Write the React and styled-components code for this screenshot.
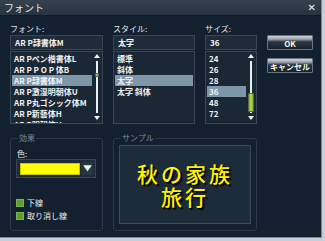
import React from "react";
import styled, { createGlobalStyle } from "styled-components";

const GlobalStyle = createGlobalStyle`
  html, body {
    margin: 0;
    padding: 0;
    background: #c6cdd7;
  }
  body {
    font-family: "Noto Sans CJK JP", "Noto Sans", sans-serif;
    -webkit-font-smoothing: antialiased;
  }
`;

const Window = styled.div`
  width: 322px;
  height: 238px;
  box-sizing: border-box;
  background: #132030;
  border-right: 1px solid #7b8696;
  border-bottom: 1px solid #7b8696;
  display: flex;
  flex-direction: column;
  overflow: hidden;
`;

const TitleBar = styled.div`
  height: 16px;
  flex: none;
  display: flex;
  align-items: center;
  justify-content: space-between;
  padding: 0 5px 0 4px;
  background: linear-gradient(#34414f, #27333f);
  border-bottom: 1px solid #0e1925;
  box-sizing: border-box;
  color: #e8eaec;
  font-size: 10px;
`;

const Close = styled.span`
  font-size: 10px;
  font-weight: bold;
  font-family: "DejaVu Sans", sans-serif;
  color: #f2f2f2;
`;

const Body = styled.div`
  padding: 8px 0 0 10px;
`;

const TopRow = styled.div`
  display: grid;
  grid-template-columns: 93px 82px 52px 46px;
  column-gap: 10px;
`;

const Column = styled.div`
  display: flex;
  flex-direction: column;
`;

const Label = styled.div`
  height: 11px;
  line-height: 10px;
  font-size: 8px;
  color: #e6e8ea;
`;

const Input = styled.div`
  height: 15px;
  box-sizing: border-box;
  border: 1px solid #3a4654;
  background: #1e2b39;
  padding-left: 4px;
  font-size: 8px;
  font-weight: bold;
  line-height: 13px;
  color: #f4f4f4;
  white-space: nowrap;
`;

const ListBox = styled.div`
  margin-top: 1px;
  height: 73px;
  box-sizing: border-box;
  border: 1px solid #3a4654;
  background: #1a2734;
  display: flex;
  overflow: hidden;
`;

const Items = styled.div`
  flex: 1;
  padding: 1px ${(p) => (p.$scroll ? 0 : 1)}px 0 1px;
  min-width: 0;
`;

const Item = styled.div`
  height: 11px;
  line-height: 11px;
  padding-left: 2px;
  font-size: 8px;
  font-weight: bold;
  color: #f2f2f2;
  white-space: nowrap;
  overflow: hidden;
  background: ${(p) => (p.$selected ? "#7d97a8" : "transparent")};
`;

const ScrollBar = styled.div`
  width: 10px;
  flex: none;
  display: flex;
  flex-direction: column;
  align-items: center;
  padding: 2px 0 3px;
  box-sizing: border-box;
`;

const Arrow = styled.div`
  width: 0;
  height: 0;
  border-left: 3px solid transparent;
  border-right: 3px solid transparent;
  ${(p) =>
    p.$down
      ? "border-top: 4px solid #f0f2f4;"
      : "border-bottom: 4px solid #f0f2f4;"}
`;

const Track = styled.div`
  flex: 1;
  width: 8px;
  margin: 3px 0;
  position: relative;
  &::before {
    content: "";
    position: absolute;
    left: 3px;
    top: 0;
    bottom: 0;
    width: 2px;
    background: #e9edf0;
  }
`;

const Thumb = styled.div`
  position: absolute;
  left: ${(p) => p.$left}px;
  width: ${(p) => p.$width}px;
  box-sizing: border-box;
  border: 1px solid #5b6a50;
  border-radius: 1px;
  background: linear-gradient(90deg, #6fa52a, #c4e24a 50%, #6fa52a);
`;

const Buttons = styled.div`
  display: flex;
  flex-direction: column;
  gap: 8px;
  padding-top: 11px;
`;

const Button = styled.div`
  height: ${(p) => p.$h}px;
  box-sizing: border-box;
  border: 1px solid #6b7480;
  border-radius: 1px;
  background: linear-gradient(#d2d6da 0, #9aa1a8 25%, #2b3744 45%, #17222e 100%);
  color: #ffffff;
  font-size: 8px;
  font-weight: bold;
  text-align: center;
  line-height: ${(p) => p.$h + 1}px;
  text-shadow: 0 0 1px #000;
`;

const BottomRow = styled.div`
  display: flex;
  gap: 10px;
  margin-top: 9px;
`;

const Group = styled.fieldset`
  margin: 0;
  width: ${(p) => p.$w}px;
  height: 98px;
  box-sizing: border-box;
  border: 1px solid #2c3947;
  border-radius: 3px;
  padding: 0 5px;
  min-width: 0;

  legend {
    font-size: 8px;
    line-height: 10px;
    color: #7f8a96;
    padding: 0 1px;
    margin-left: 2px;
  }
`;

const SmallLabel = styled.div`
  margin-top: 6px;
  height: 10px;
  line-height: 10px;
  font-size: 8px;
  color: #e6e8ea;
  padding-left: 1px;
`;

const Combo = styled.div`
  width: 80px;
  height: 19px;
  box-sizing: border-box;
  border: 1px solid #3a4654;
  background: #1e2b39;
  display: flex;
  align-items: center;
  padding: 0 2px 0 3px;
  gap: 2px;
`;

const Swatch = styled.div`
  flex: 1;
  height: 12px;
  box-sizing: border-box;
  background: ${(p) => p.$color};
  border: 1px solid #c9c400;
`;

const DropButton = styled.div`
  width: 11px;
  height: 13px;
  background: #2a3642;
  display: flex;
  align-items: center;
  justify-content: center;
`;

const CheckRow = styled.div`
  display: flex;
  align-items: center;
  gap: 3px;
  height: 11px;
  margin-top: ${(p) => p.$mt}px;
  font-size: 8px;
  color: #eef0f2;
`;

const CheckBox = styled.span`
  width: 8px;
  height: 8px;
  box-sizing: border-box;
  background: #5e9d2d;
  border: 1px solid #79b44a;
`;

const Preview = styled.div`
  margin-top: 2px;
  height: 79px;
  box-sizing: border-box;
  border: 1px solid #3c4a58;
  background: #1d2c3b;
  display: flex;
  flex-direction: column;
  align-items: center;
  justify-content: center;
  font-size: 21px;
  font-weight: 500;
  line-height: 23px;
  letter-spacing: 3px;
  color: #fff200;
  text-shadow: 1px 1px 0 #05080c, 2px 2px 1px #05080c;
`;

const fonts = [
  "AR Pペン楷書体L",
  "AR P P O P 体B",
  "AR P隷書体M",
  "AR P激湿明朝体U",
  "AR P丸ゴシック体M",
  "AR P新藝体H",
  "AR P明朝体U",
];
const styles = ["標準", "斜体", "太字", "太字 斜体"];
const sizes = ["24", "26", "28", "36", "48", "72"];

const Scroll = ({ thumbTop, thumbHeight, thumbLeft, thumbWidth }) => (
  <ScrollBar>
    <Arrow />
    <Track>
      <Thumb
        $left={thumbLeft}
        $width={thumbWidth}
        style={{ top: thumbTop, height: thumbHeight }}
      />
    </Track>
    <Arrow $down />
  </ScrollBar>
);

export default function App() {
  return (
    <>
      <GlobalStyle />
      <Window>
        <TitleBar>
          <span>フォント</span>
          <Close>✕</Close>
        </TitleBar>
        <Body>
          <TopRow>
            <Column>
              <Label>フォント:</Label>
              <Input>AR P隷書体M</Input>
              <ListBox>
                <Items $scroll>
                  {fonts.map((f) => (
                    <Item key={f} $selected={f === "AR P隷書体M"}>
                      {f}
                    </Item>
                  ))}
                </Items>
                <Scroll thumbTop={12} thumbHeight={4} thumbLeft={2} thumbWidth={4} />
              </ListBox>
            </Column>
            <Column>
              <Label>スタイル:</Label>
              <Input>太字</Input>
              <ListBox>
                <Items>
                  {styles.map((s) => (
                    <Item key={s} $selected={s === "太字"}>
                      {s}
                    </Item>
                  ))}
                </Items>
              </ListBox>
            </Column>
            <Column>
              <Label>サイズ:</Label>
              <Input>36</Input>
              <ListBox>
                <Items $scroll>
                  {sizes.map((s) => (
                    <Item key={s} $selected={s === "36"}>
                      {s}
                    </Item>
                  ))}
                </Items>
                <Scroll thumbTop={32} thumbHeight={19} thumbLeft={1} thumbWidth={6} />
              </ListBox>
            </Column>
            <Buttons>
              <Button $h={15}>OK</Button>
              <Button $h={15}>キャンセル</Button>
            </Buttons>
          </TopRow>
          <BottomRow>
            <Group $w={93}>
              <legend>効果</legend>
              <SmallLabel>色:</SmallLabel>
              <Combo>
                <Swatch $color="#ffff00" />
                <DropButton>
                  <svg width="9" height="7" viewBox="0 0 9 7">
                    <path d="M0.5 0.5 H8.5 L4.5 6.5 Z" fill="#e4e7ea" />
                    <path d="M0.5 0.5 H8.5 L7.2 2.5 H1.8 Z" fill="#ffffff" />
                  </svg>
                </DropButton>
              </Combo>
              <CheckRow $mt={19}>
                <CheckBox />
                下線
              </CheckRow>
              <CheckRow $mt={2}>
                <CheckBox />
                取り消し線
              </CheckRow>
            </Group>
            <Group $w={144}>
              <legend>サンプル</legend>
              <Preview>
                <div>秋の家族</div>
                <div>旅行</div>
              </Preview>
            </Group>
          </BottomRow>
        </Body>
      </Window>
    </>
  );
}
